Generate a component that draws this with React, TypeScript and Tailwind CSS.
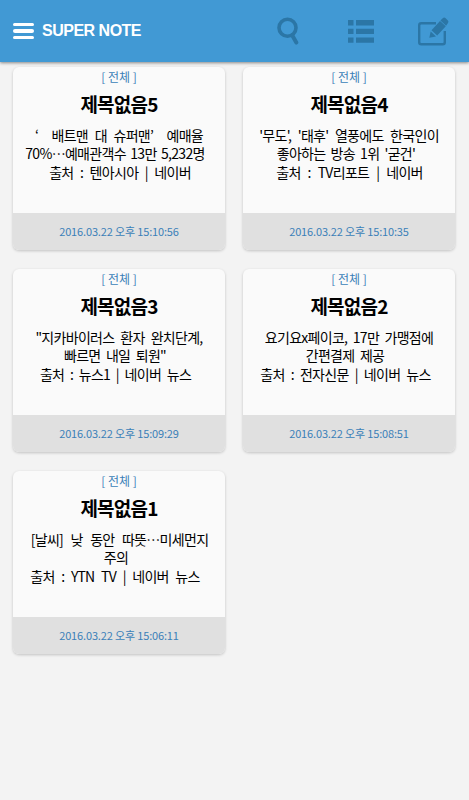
import React from "react";

interface NoteLine {
  text: string;
  className: string;
}

interface Note {
  id: number;
  title: string;
  lines: NoteLine[];
  date: string;
}

const notes: Note[] = [
  {
    id: 5,
    title: "제목없음5",
    lines: [
      { text: "‘  배트맨 대 슈퍼맨’  예매율", className: "[word-spacing:4.2px]" },
      { text: "70%…예매관객수 13만 5,232명", className: "pr-2 [word-spacing:2px]" },
      { text: "출처 : 텐아시아 | 네이버", className: "pl-[2px] [word-spacing:4px]" },
    ],
    date: "2016.03.22 오후 15:10:56",
  },
  {
    id: 4,
    title: "제목없음4",
    lines: [
      { text: "'무도', '태후' 열풍에도 한국인이", className: "[word-spacing:4px]" },
      { text: "좋아하는 방송 1위 '굳건'", className: "pr-[6px] [word-spacing:2.7px]" },
      { text: "출처 : TV리포트 | 네이버", className: "pl-[1px] [word-spacing:4.5px]" },
    ],
    date: "2016.03.22 오후 15:10:35",
  },
  {
    id: 3,
    title: "제목없음3",
    lines: [
      { text: "\"지카바이러스 환자 완치단계,", className: "[word-spacing:3.5px]" },
      { text: "빠르면 내일 퇴원\"", className: "pr-2 [word-spacing:3px]" },
      { text: "출처 : 뉴스1 | 네이버 뉴스", className: "pr-[7px] [word-spacing:3.2px]" },
    ],
    date: "2016.03.22 오후 15:09:29",
  },
  {
    id: 2,
    title: "제목없음2",
    lines: [
      { text: "요기요x페이코, 17만 가맹점에", className: "[word-spacing:3px]" },
      { text: "간편결제 제공", className: "pr-2 [word-spacing:3px]" },
      { text: "출처 : 전자신문 | 네이버 뉴스", className: "pr-[7px] [word-spacing:3.6px]" },
    ],
    date: "2016.03.22 오후 15:08:51",
  },
  {
    id: 1,
    title: "제목없음1",
    lines: [
      { text: "[날씨] 낮 동안 따뜻…미세먼지", className: "pl-[1px] [word-spacing:5px]" },
      { text: "주의", className: "pr-[6px]" },
      { text: "출처 : YTN TV | 네이버 뉴스", className: "pr-2 [word-spacing:4.1px]" },
    ],
    date: "2016.03.22 오후 15:06:11",
  },
];

const Header: React.FC = () => (
  <header className="relative h-[62px] bg-[#4199d4] shadow-[0_1px_3px_rgba(0,0,0,0.45)] flex items-center pl-[13px] pr-[20px]">
    <button className="flex flex-col gap-[3px]" aria-label="Menu">
      <span className="w-[21px] h-[3.6px] rounded-sm bg-white" />
      <span className="w-[21px] h-[3.6px] rounded-sm bg-white" />
      <span className="w-[21px] h-[3.6px] rounded-sm bg-white" />
    </button>
    <h1 className="ml-2 font-['Liberation_Sans',sans-serif] text-base font-bold tracking-[-0.5px] text-white whitespace-nowrap">
      SUPER NOTE
    </h1>
    <div className="ml-auto flex items-center text-[#2b76a6]">
      <svg className="w-[22px] h-[28px]" viewBox="0 0 22 28" fill="none" stroke="currentColor">
        <circle cx="10.5" cy="10.8" r="8.5" strokeWidth="3.6" />
        <path d="M15.2 18.3L19.3 25.6" strokeWidth="4" strokeLinecap="round" />
      </svg>
      <svg className="ml-[49px] w-[26px] h-[24px]" viewBox="0 0 26 24" fill="currentColor">
        <path d="M0 1h5.5v5.4H0zM8 1h18v5.4H8zM0 9.7h5.5v5.4H0zM8 9.7h18v5.4H8zM0 18.4h5.5v5.4H0zM8 18.4h18v5.4H8z" />
      </svg>
      <svg className="ml-[44px] w-[31px] h-[29px]" viewBox="0 0 31 29" fill="currentColor">
        <path
          d="M18 6.2H3.2Q1.2 6.2 1.2 8.2V25.3Q1.2 27.3 3.2 27.3H24.8Q26.8 27.3 26.8 25.3V14"
          fill="none"
          stroke="currentColor"
          strokeWidth="2.4"
        />
        <path d="M11.3 20.8L12.7 14.4L18 19.4ZM13.5 13.2L22 4L27.8 9.2L19.2 18.4ZM22.4 3.6L25 1Q26.2 0 27.4 1L29.9 3.4Q31 4.6 30 5.9L28.1 8.7Z" />
      </svg>
    </div>
  </header>
);

const NoteCard: React.FC<{ note: Note }> = ({ note }) => (
  <article className="h-[183px] flex flex-col rounded-md overflow-hidden bg-[#fafafa] text-center shadow-[0_1px_3px_rgba(0,0,0,0.2)]">
    <div className="flex-1">
      <p className="pt-[2px] text-[12px] leading-4 text-[#3b7fb8]">[ 전체 ]</p>
      <h2 className="mt-[6px] text-[19px] leading-[26px] font-bold tracking-[-0.8px] text-black">
        {note.title}
      </h2>
      <div className="mt-[8.5px] text-[14px] leading-[18.5px] tracking-[-0.7px] text-black whitespace-pre">
        {note.lines.map((line) => (
          <p key={line.text} className={line.className}>
            {line.text}
          </p>
        ))}
      </div>
    </div>
    <footer className="h-[37px] flex items-center justify-center bg-[#e0e0e0] text-[11px] tracking-[-0.15px] text-[#3b7fb8] whitespace-nowrap">
      {note.date}
    </footer>
  </article>
);

const App: React.FC = () => (
  <div className="w-full min-h-screen overflow-hidden bg-[#f3f3f3] font-['Noto_Sans_CJK_KR',sans-serif]">
    <Header />
    <main className="grid grid-cols-[212px_212px] gap-x-[18px] gap-y-[19px] pl-[13px] pt-[5px]">
      {notes.map((note) => (
        <NoteCard key={note.id} note={note} />
      ))}
    </main>
  </div>
);

export default App;
